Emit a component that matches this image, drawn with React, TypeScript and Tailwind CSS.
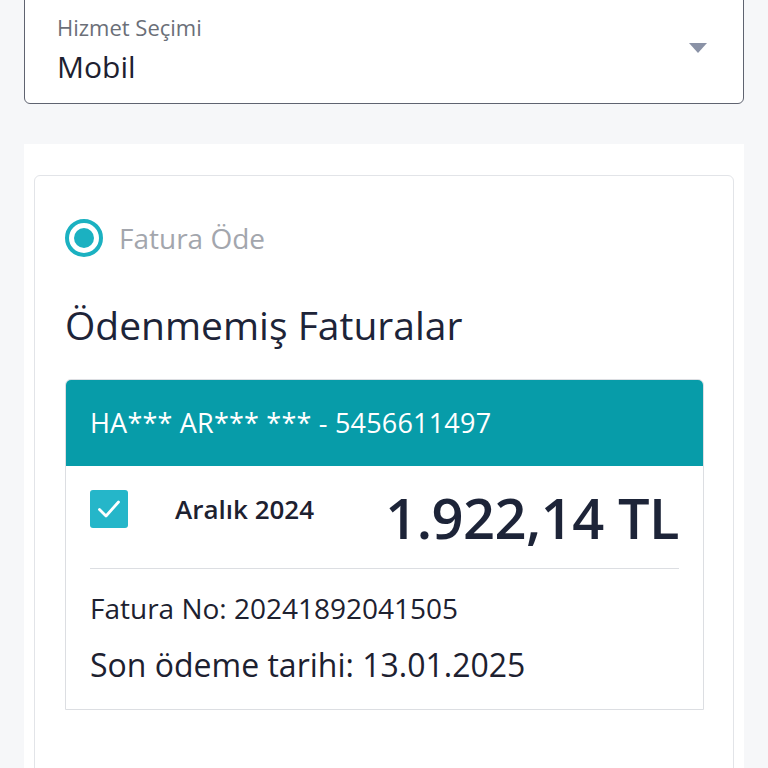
import React from "react";

const App: React.FC = () => {
  return (
    <div className="h-[768px] w-[768px] bg-[#f6f7f9] overflow-hidden flex flex-col" style={{ fontFamily: "'Open Sans', 'Noto Sans', sans-serif" }}>
      <div className="px-6 -mt-3">
        <div className="h-[116px] bg-white border border-[#5f6370] rounded-[6px] flex items-start justify-between pl-8 pr-9 pt-[25px]">
          <div className="flex flex-col">
            <span className="text-[22px] leading-[26px] text-[#6b6f78]">Hizmet Seçimi</span>
            <span className="mt-[7px] text-[30px] leading-[40px] text-[#1d2130]">Mobil</span>
          </div>
          <svg width="18" height="10" viewBox="0 0 18 10" className="mt-[29px]">
            <path d="M0 0 L18 0 L9 10 Z" fill="#8a92a6" />
          </svg>
        </div>
      </div>

      <div className="mx-6 mt-10 flex-1 bg-white px-[10px] pt-[31px] overflow-hidden">
        <div className="border border-[#e2e4e8] rounded-[6px] px-[30px] pt-[41px] h-[620px]">
          <div className="flex items-center gap-4 h-[42px]">
            <div className="w-[38px] h-[38px] rounded-full border-[4px] border-[#1bb1c1] flex items-center justify-center">
              <div className="w-[20px] h-[20px] rounded-full bg-[#1bb1c1]" />
            </div>
            <span className="text-[28px] leading-[42px] text-[#a3a6ad]">Fatura Öde</span>
          </div>

          <h2 className="mt-[42px] text-[39px] leading-[48px] text-[#1d2438]">Ödenmemiş Faturalar</h2>

          <div className="mt-[30px] w-[639px] border border-[#dcdee2] rounded-t-[6px] overflow-hidden">
            <div className="h-[86px] bg-[#079ca9] flex items-center px-6">
              <span className="text-[27px] text-white tracking-[0.2px]">HA*** AR*** *** - 5456611497</span>
            </div>
            <div className="px-6">
              <div className="h-[102px] flex items-center">
                <div className="mb-[16px] w-[38px] h-[38px] rounded-[3px] bg-[#25b6c9] flex items-center justify-center">
                  <svg width="26" height="22" viewBox="0 0 26 22" fill="none">
                    <path d="M3.5 11.5 L10 18 L22.5 4" stroke="white" strokeWidth="2.8" strokeLinecap="round" strokeLinejoin="round" />
                  </svg>
                </div>
                <span className="mb-[16px] ml-[47px] text-[26px] font-semibold text-[#1d2130]">Aralık 2024</span>
                <span className="ml-auto text-[56px] font-semibold text-[#1d2438] leading-none tracking-[-0.5px]">1.922,14 TL</span>
              </div>
              <div className="border-t border-[#dcdee2]" />
              <div className="pt-[23px] pb-[24px]">
                <div className="text-[28px] leading-[32px] text-[#1d2130]">Fatura No: 20241892041505</div>
                <div className="mt-[21px] text-[32px] leading-[40px] text-[#1d2130]">Son ödeme tarihi: 13.01.2025</div>
              </div>
            </div>
          </div>
        </div>
      </div>
    </div>
  );
};

export default App;
